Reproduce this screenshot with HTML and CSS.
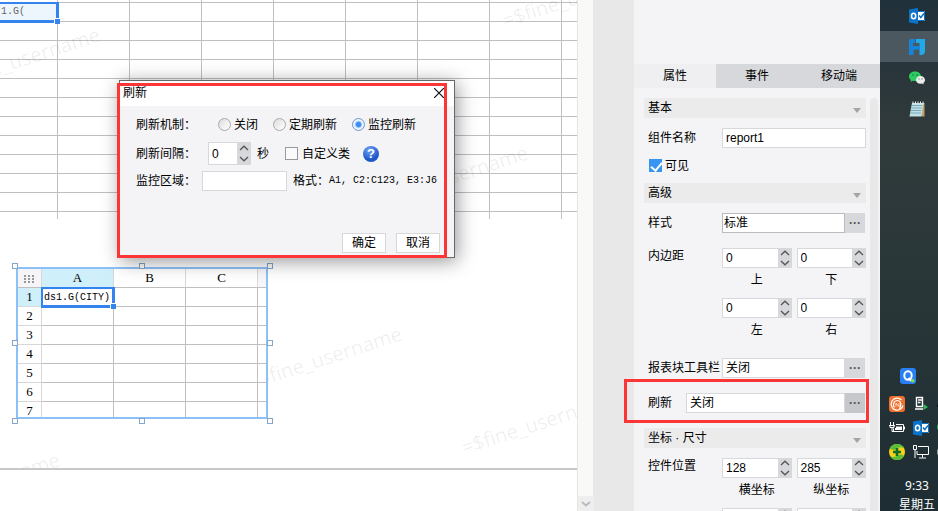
FILE: index.html
```html
<!DOCTYPE html>
<html lang="zh-CN">
<head>
<meta charset="utf-8">
<title>报表设计器</title>
<link rel="stylesheet" href="styles.css">
</head>
<body>
<svg class="defs" width="0" height="0" aria-hidden="true">
  <symbol id="up" viewBox="0 0 10 6"><path d="M1 5 5 1.2 9 5" fill="none" stroke="#555" stroke-width="1.3"/></symbol>
  <symbol id="down" viewBox="0 0 10 6"><path d="M1 1 5 4.8 9 1" fill="none" stroke="#555" stroke-width="1.3"/></symbol>
  <symbol id="outlook" viewBox="0 0 16 16">
    <path d="M8 3h8v10H8z" fill="#fff"/>
    <path d="M9 3.500h6.500v9H9" fill="none" stroke="#0a72c8"/>
    <path d="m10 7.500 1.800 2L15 5.500" fill="none" stroke="#0a72c8" stroke-width="1.500"/>
    <path d="M0 1.500 9 0v16L0 14.500z" fill="#0a72c8"/>
    <ellipse cx="4.600" cy="8" rx="2.100" ry="2.800" fill="none" stroke="#fff" stroke-width="1.600"/>
  </symbol>
</svg>

<main class="workspace">
  <section class="sheet">
    <div class="cell-selected">1.G(</div>
  </section>
  <div class="paper-marks" aria-hidden="true">
    <span class="mark m1">=$fine_username</span>
    <span class="mark m2">=$fine_username</span>
    <span class="mark m3">=$fine_username</span>
    <span class="mark m4">=$fine_username</span>
    <span class="mark m5">=$fine_username</span>
    <span class="mark m6">=$fine_username</span>
  </div>

  <section class="report">
    <div class="report-clip">
      <table>
        <thead>
          <tr><th class="corner"><svg width="11" height="8" viewBox="0 0 11 8" fill="#999"><path d="M0 0h2v2H0zM4 0h2v2H4zM8 0h2v2H8zM0 3h2v2H0zM4 3h2v2H4zM8 3h2v2H8zM0 6h2v2H0zM4 6h2v2H4zM8 6h2v2H8z"/></svg></th><th class="active">A</th><th>B</th><th>C</th><th class="cut"></th></tr>
        </thead>
        <tbody>
          <tr><th class="active">1</th><td class="current">ds1.G(CITY)</td><td></td><td></td><td></td></tr>
          <tr><th>2</th><td></td><td></td><td></td><td></td></tr>
          <tr><th>3</th><td></td><td></td><td></td><td></td></tr>
          <tr><th>4</th><td></td><td></td><td></td><td></td></tr>
          <tr><th>5</th><td></td><td></td><td></td><td></td></tr>
          <tr><th>6</th><td></td><td></td><td></td><td></td></tr>
          <tr><th>7</th><td></td><td></td><td></td><td></td></tr>
        </tbody>
      </table>
    </div>
    <i class="grip t l"></i><i class="grip t c"></i><i class="grip t r"></i>
    <i class="grip m l"></i><i class="grip m r"></i>
    <i class="grip b l"></i><i class="grip b c"></i><i class="grip b r"></i>
  </section>

  <section class="dialog" role="dialog" aria-labelledby="dlg-title">
    <header class="dialog-head">
      <span id="dlg-title">刷新</span>
      <button class="close" aria-label="关闭"><svg width="10" height="10" viewBox="0 0 10 10"><path d="M0 0 10 10M10 0 0 10" stroke="#111" stroke-width="1.200"/></svg></button>
    </header>
    <form class="dialog-body">
      <div class="line">
        <span class="line-label wide">刷新机制：</span>
        <label class="choice"><input type="radio" name="mode">关闭</label>
        <label class="choice"><input type="radio" name="mode">定期刷新</label>
        <label class="choice"><input type="radio" name="mode" checked>监控刷新</label>
      </div>
      <div class="line">
        <label class="line-label mid" for="interval">刷新间隔：</label>
        <span class="spin short"><input id="interval" type="text" value="0"><span class="arrows"><button type="button" aria-label="增加"><svg width="10" height="6"><use href="#up"/></svg></button><button type="button" aria-label="减少"><svg width="10" height="6"><use href="#down"/></svg></button></span></span>
        <span class="unit">秒</span>
        <label class="choice tick"><input type="checkbox">自定义类</label>
        <button type="button" class="help" aria-label="帮助">?</button>
      </div>
      <div class="line low">
        <label class="line-label" for="area">监控区域：</label>
        <input class="area" id="area" type="text">
        <span class="hint">格式：</span><span class="code">A1, C2:C123, E3:J6</span>
      </div>
      <div class="actions"><button type="button">确定</button><button type="button">取消</button></div>
    </form>
  </section>
</main>

<div class="scroll"><button aria-label="向下滚动"><svg width="10" height="6" viewBox="0 0 10 6"><path d="M1 1 5 4.500 9 1" fill="none" stroke="#bbb" stroke-width="2"/></svg></button></div>

<aside class="panel">
  <nav class="tabs"><button class="on">属性</button><button>事件</button><button>移动端</button></nav>
  <div class="panel-main">
    <div class="props">
      <h2>基本</h2>
      <div class="prop"><label for="name">组件名称</label><input id="name" type="text" value="report1"></div>
      <label class="choice visible"><input type="checkbox" checked>可见</label>
      <h2>高级</h2>
      <div class="prop"><label for="style">样式</label><span class="pick dark"><input id="style" type="text" value="标准"><button aria-label="选择样式">···</button></span></div>
      <div class="prop spaced">
        <span class="side">内边距</span>
        <div class="pairs">
          <label class="num"><span class="spin"><input type="text" value="0"><span class="arrows"><button aria-label="增加"><svg width="10" height="6"><use href="#up"/></svg></button><button aria-label="减少"><svg width="10" height="6"><use href="#down"/></svg></button></span></span>上</label>
          <label class="num"><span class="spin"><input type="text" value="0"><span class="arrows"><button aria-label="增加"><svg width="10" height="6"><use href="#up"/></svg></button><button aria-label="减少"><svg width="10" height="6"><use href="#down"/></svg></button></span></span>下</label>
          <label class="num"><span class="spin"><input type="text" value="0"><span class="arrows"><button aria-label="增加"><svg width="10" height="6"><use href="#up"/></svg></button><button aria-label="减少"><svg width="10" height="6"><use href="#down"/></svg></button></span></span>左</label>
          <label class="num"><span class="spin"><input type="text" value="0"><span class="arrows"><button aria-label="增加"><svg width="10" height="6"><use href="#up"/></svg></button><button aria-label="减少"><svg width="10" height="6"><use href="#down"/></svg></button></span></span>右</label>
        </div>
      </div>
      <div class="prop spaced"><label for="bar">报表块工具栏</label><span class="pick"><input id="bar" type="text" value="关闭"><button aria-label="设置工具栏">···</button></span></div>
      <div class="prop spaced narrow marked"><label for="refresh">刷新</label><span class="pick pressed"><input id="refresh" type="text" value="关闭"><button aria-label="设置刷新">···</button></span></div>
      <h2 class="spaced">坐标 · 尺寸</h2>
      <div class="prop">
        <span class="side">控件位置</span>
        <div class="pairs">
          <label class="num"><span class="spin"><input type="text" value="128"><span class="arrows"><button aria-label="增加"><svg width="10" height="6"><use href="#up"/></svg></button><button aria-label="减少"><svg width="10" height="6"><use href="#down"/></svg></button></span></span>横坐标</label>
          <label class="num"><span class="spin"><input type="text" value="285"><span class="arrows"><button aria-label="增加"><svg width="10" height="6"><use href="#up"/></svg></button><button aria-label="减少"><svg width="10" height="6"><use href="#down"/></svg></button></span></span>纵坐标</label>
          <label class="num"><span class="spin"><input type="text"><span class="arrows"><button aria-label="增加"><svg width="10" height="6"><use href="#up"/></svg></button><button aria-label="减少"><svg width="10" height="6"><use href="#down"/></svg></button></span></span></label>
          <label class="num"><span class="spin"><input type="text"><span class="arrows"><button aria-label="增加"><svg width="10" height="6"><use href="#up"/></svg></button><button aria-label="减少"><svg width="10" height="6"><use href="#down"/></svg></button></span></span></label>
        </div>
      </div>
    </div>
    <div class="thumb"></div>
  </div>
</aside>

<aside class="taskbar">
  <div class="apps">
    <button aria-label="Outlook"><svg width="16" height="16"><use href="#outlook"/></svg></button>
    <button class="on" aria-label="设计器"><svg width="16" height="16" viewBox="0 0 16 16"><path d="M0 2Q0 0 2 0H6V3.500L4 4.500V7H7V10.500H4.500V16H0z" fill="#1585dc"/><path d="M7 0H16V12Q16 16 12 16H10.500V4H7z" fill="#22a9e8"/><path d="M4 7h7v3.500H4z" fill="#1585dc"/></svg></button>
    <button aria-label="微信"><svg width="16" height="16" viewBox="0 0 16 16"><path d="M6 1.500C2.700 1.500 0 3.600 0 6.400c0 1.500.8 2.800 2 3.700L1.500 12l2.200-1.200c3 1 8.300-.3 8.300-4.400C12 3.600 9.300 1.500 6 1.500z" fill="#2dcc62"/><circle cx="4" cy="5" r=".8" fill="#146b32"/><circle cx="8" cy="5" r=".8" fill="#146b32"/><path d="M11.500 6C9 6 7 7.800 7 9.900s2 3.900 4.500 3.900l1.500-.2 1.700.9-.4-1.500c1-.7 1.700-1.800 1.700-3.100C16 7.800 14 6 11.500 6z" fill="#ececec"/><circle cx="10" cy="9" r=".7" fill="#777"/><circle cx="13" cy="9" r=".7" fill="#777"/></svg></button>
    <button aria-label="记事本"><svg width="16" height="16" viewBox="0 0 16 16"><path d="M3.500 2H15.500V15.500H13z" fill="#c5a06a"/><path d="M3 2H14.500L12.500 15.500H.5z" fill="#bfe0e6"/><path d="M3 4.500h10.500M2.500 7h10.500M2 9.500h10.500M1.500 12H12" stroke="#78aab8"/><path d="M4 .5v3M6.500 .5v3M9 .5v3M11.500 .5v3M14 .5v3" stroke="#e9eeee"/></svg></button>
  </div>
  <svg class="lead" width="16" height="16" viewBox="0 0 16 16"><rect width="16" height="16" rx="3" fill="#2880f4"/><ellipse cx="8" cy="7.500" rx="3.700" ry="4.300" fill="none" stroke="#fff" stroke-width="2"/><path d="m8.500 10 3 3" stroke="#fff" stroke-width="2"/><circle cx="12.800" cy="12.800" r="1.700" fill="#8ae04c"/></svg>
  <div class="tray">
    <svg width="16" height="16" viewBox="0 0 16 16"><rect width="16" height="16" rx="3" fill="#f0702d"/><path d="M12.500 4A6 6 0 1 0 14 9.500M5.500 11.500C3.500 9 4.500 5 8 4.500c3 0 4.500 2.500 3.500 5.500l-1 3" fill="none" stroke="#fff" stroke-width="1.200"/><path d="M7 10.500V7l3 3.500V7" fill="none" stroke="#ffe0c8"/></svg>
    <svg width="16" height="16" viewBox="0 0 16 16"><path d="M3.500 1.500h6v9h-6zM5 4h4M5 6.500h2.500M2 13h8" fill="none" stroke="#fff" stroke-width="1.400"/><path d="m10.500 8 4.500 3-4.500 3z" fill="#31ba5b"/></svg>
    <svg width="16" height="16" viewBox="0 0 16 16"><path d="M0 9 5 5v6H0z" fill="#090d10"/></svg>
    <svg width="16" height="16" viewBox="0 0 16 16"><path d="M1.500 2v3M4.500 2v3M0 5.500h6M1 6v1.500h4V6M3 7.500v4h2" fill="none" stroke="#fff"/><path d="M7 4.500h7.500v7H4.500V8.500" fill="none" stroke="#fff"/><path d="M7 6.500h6v3.500H6V8h1zM15 6.500h1v3h-1z" fill="#fff"/></svg>
    <svg width="16" height="16"><use href="#outlook"/></svg>
    <svg width="16" height="16" viewBox="0 0 16 16"><circle cx="5" cy="7" r="5" fill="#21bd5b"/></svg>
    <svg width="16" height="16" viewBox="0 0 16 16"><circle cx="8" cy="8" r="8" fill="#f5d31a"/><path d="M1 4.200A8 8 0 0 1 15 4c-4-1.500-6-.5-8 1S2 6 1 4.200zM1 12a8 8 0 0 0 14 0c-2-2-4-2-6-.5S3 13.500 1 12z" fill="#58bd38"/><path d="M8 4v8M4 8h8" stroke="#116b2c" stroke-width="2.600"/></svg>
    <svg width="16" height="16" viewBox="0 0 16 16"><path d="M5 2.500h10.500v8H4V7M9.500 10.500v3M6 14h7M.5 1.500h3v4h-3zM2 5.500V14" fill="none" stroke="#fff"/></svg>
    <svg width="16" height="16" viewBox="0 0 16 16"><path d="M.5 5.500h4v5h-4z" fill="#fff"/></svg>
  </div>
  <div class="clock"><time>9:33</time><span>星期五</span></div>
</aside>
</body>
</html>
```

FILE: styles.css
```css
* { box-sizing: border-box; }
body {
  margin: 0;
  height: 100vh;
  display: flex;
  overflow: hidden;
  background: #fff;
  color: #000;
  font: 12px/16px "Liberation Sans", "Noto Sans CJK SC", sans-serif;
}
.defs { position: absolute; }
button, input { font: inherit; color: inherit; margin: 0; }
button { border: 0; padding: 0; background: none; display: flex; align-items: center; justify-content: center; }
input[type="text"] { width: 100%; min-width: 0; border: 1px solid #d7d8db; background: #fff; padding: 0 3px; border-radius: 0; }

/* Design canvas */
.workspace { flex: 1; min-width: 0; position: relative; overflow: hidden; }
.sheet {
  height: 219px;
  background:
    linear-gradient(#bfbfbf, #bfbfbf) 0 2px / 100% 1px no-repeat,
    repeating-linear-gradient(to bottom, transparent 0 2px, #bfbfbf 2px 3px, transparent 3px 19px),
    repeating-linear-gradient(to right, transparent 0 57px, #bfbfbf 57px 58px, transparent 58px 72px);
  padding-top: 2px;
}
.cell-selected {
  position: relative;
  width: 59px;
  height: 21px;
  border: solid #3583ee;
  border-width: 2px 3px 3px 0;
  background: #eef6fd;
  color: #666;
  padding-left: 1px;
  font-family: "Liberation Mono", monospace;
  font-size: 10px;
}
.cell-selected::after, .current::after {
  content: "";
  position: absolute;
  right: -4px;
  bottom: -4px;
  width: 5px;
  height: 5px;
  background: #3583ee;
  box-shadow: -1px -1px #fff;
}
.paper-marks { position: absolute; inset: 0 0 41px; overflow: hidden; border-bottom: 2px solid #c8c8c8; }
.mark {
  position: absolute;
  font: 20px/24px "Open Sans", sans-serif;
  color: rgba(0, 0, 0, .07);
  transform: rotate(-18deg);
  transform-origin: 0 50%;
}
.m1 { left: -54px; top: 72px; }
.m2 { left: 503px; top: 9px; }
.m3 { left: 374px; top: 190px; }
.m4 { left: 248px; top: 371px; }
.m5 { left: 462px; top: 436px; }
.m6 { left: -94px; top: 497px; }

/* Report block */
.report { position: absolute; left: 16px; top: 267px; width: 252px; height: 152px; border: 2px solid #8cc1f8; background: #fff; }
.report-clip { height: 100%; overflow: hidden; }
table { width: 100%; table-layout: fixed; border-collapse: separate; border-spacing: 0; }
tr { height: 19px; }
th, td { height: 19px; padding: 0; border: solid #bfbfbf; border-width: 0 1px 1px 0; width: 72px; line-height: 16px; }
th { font: 13px/18px "Liberation Serif", serif; text-align: center; border-color: #d8d8d8; }
th:last-child, td:last-child { border-right: 0; }
thead th { border-bottom-color: #bfbfbf; }
.corner { width: 24px; background: #f5f5f8; }
.corner svg { display: block; margin: 1px auto 0; }
.cut { width: auto; background: #f7f7f9; }
.active { background: #cfeffb; }
.current { position: relative; font-family: "Liberation Mono", monospace; font-size: 10px; padding: 2px 0 0 2px; }
.current::before { content: ""; position: absolute; inset: -1px -2px -2px -1px; border: 3px solid #3583ee; border-width: 2px 3px 3px 2px; }
.current::after { right: -3px; bottom: -3px; }
.grip { position: absolute; width: 6px; height: 6px; border: 1px solid #84a6c8; background: #fff; }
.t { top: -6px; } .m { top: 71px; } .b { bottom: -7px; }
.l { left: -6px; } .c { left: 121px; } .r { right: -7px; }

/* Refresh dialog */
.dialog { position: absolute; left: 119px; top: 80px; width: 336px; border: 1px solid #68686b; background: #f4f4f7; box-shadow: 2px 3px 18px rgba(0, 0, 0, .42); }
.dialog::after { content: ""; position: absolute; inset: 2px 7px -1px -3px; border: 3px solid #fc3636; pointer-events: none; }
.dialog-head { height: 25px; padding: 0 10px 2px 3px; display: flex; align-items: center; justify-content: space-between; background: #fff; }
.dialog-body { padding: 7px 14px 4px 16px; }
.line { display: flex; height: 23px; align-items: center; margin-bottom: 6px; white-space: nowrap; }
.line.low { height: 20px; }
.line-label { width: 66px; flex: none; }
.line-label.mid { width: 72px; }
.line-label.wide { width: 82px; }
.choice { display: flex; align-items: center; gap: 3px; margin-right: 15px; }
input[type="radio"] { appearance: none; width: 13px; height: 13px; border: 1px solid #a8a8a8; border-radius: 50%; background: linear-gradient(135deg, #ddd, #fff); }
input[type="radio"]:checked { border-color: #7396c4; background: radial-gradient(circle, #3c8cf0 0 2px, #eaf3fd 4px); }
input[type="checkbox"] { appearance: none; width: 13px; height: 13px; border: 1px solid #999; background: #fafafa; }
input[type="checkbox"]:checked { border-color: #3595f0; background: #3595f0; position: relative; }
input[type="checkbox"]:checked::after { content: ""; position: absolute; left: 3px; top: 0; width: 5px; height: 9px; border: solid #fff; border-width: 0 2px 2px 0; transform: rotate(40deg); }
.spin { display: flex; width: 100%; height: 20px; }
.spin input { border-right: 0; }
.spin.short { width: 43px; height: 23px; }
.arrows { flex: none; width: 14px; display: flex; flex-direction: column; background: #d7d8db; }
.arrows button { flex: 1; }
.unit { width: 28px; margin-left: 6px; }
.tick { margin-right: 13px; gap: 4px; }
.help { width: 16px; height: 16px; border-radius: 50%; background: radial-gradient(circle at 40% 25%, #6fa4f0, #1f56c8 65%); color: #fff; font-weight: bold; font-size: 13px; }
input.area { width: 85px; height: 20px; margin-right: 6px; }
.hint { width: 36px; }
.code { font-family: "Liberation Mono", monospace; font-size: 10px; }
.actions { display: flex; justify-content: flex-end; gap: 10px; margin-top: 42px; }
.actions button { width: 44px; height: 20px; border: 1px solid #d7d8db; background: #fff; }

/* Canvas scroll bar */
.scroll { flex: none; width: 57px; padding-right: 40px; display: flex; flex-direction: column; justify-content: flex-end; border-left: 1px solid #e6e6dc; background: linear-gradient(to right, #f9f9f7 15px, #e8e8e8 15px); }
.scroll button { width: 16px; height: 15px; background: #eee; }

/* Property panel */
.panel { flex: none; width: 246px; padding-top: 64px; display: flex; flex-direction: column; background: #f4f4f7; }
.tabs { display: flex; height: 24px; flex: none; }
.tabs button { flex: 1; background: #d7d8db; }
.tabs .on { background: #efeff1; }
.panel-main { display: flex; flex: 1; min-height: 0; gap: 4px; padding: 10px 2px 0 10px; }
.thumb { flex: none; width: 8px; height: 420px; border-radius: 4px; background: #e8e8e8; }
.props { flex: 1; display: flex; flex-direction: column; gap: 10px; }
.props > * { flex: none; }
h2 { margin: 0; height: 20px; padding: 0 5px 0 4px; display: flex; align-items: center; justify-content: space-between; font: inherit; background: #ebebec; }
h2::after { content: ""; border: 4px solid transparent; border-top: 5px solid #a5a5a5; border-bottom: 0; margin-top: 4px; }
.prop { display: grid; grid-template-columns: 74px 1fr; padding-left: 4px; line-height: 20px; white-space: nowrap; }
.prop.narrow { grid-template-columns: 38px 1fr; }
.prop input { height: 20px; }
.spaced { margin-top: 5px; }
.side { line-height: 16px; }
.visible { height: 15px; padding-left: 5px; }
.pick { display: flex; padding-right: 1px; }
.pick button { flex: none; width: 20px; background: #d7d8db; color: #555; font-weight: bold; }
.pick.dark input { border-color: #bbb; padding-left: 1px; }
.pick.pressed button { background: #c6c7ca; }
.marked { position: relative; }
.marked::after { content: ""; position: absolute; inset: -14px -3px -10px -20px; border: 3px solid #fc3636; pointer-events: none; }
.pairs { display: grid; grid-template-columns: 1fr 1fr; gap: 5px; }
.num { display: flex; flex-direction: column; align-items: center; line-height: 25px; }

/* System task bar */
.taskbar { flex: none; width: 58px; overflow: hidden; display: flex; flex-direction: column; background: linear-gradient(#20303a, #303a3b 25%, #283638 60%, #1e2d34); color: #fff; }
.apps button { width: 100%; height: 31px; padding-left: 16px; }
.apps .on { background: #4c585f; }
.lead { flex: none; margin: auto 0 12px 20px; }
.tray { margin-left: 9px; display: grid; grid-template-columns: repeat(3, 24px); grid-auto-rows: 16px; gap: 8px 0; }
.clock { margin: 16px 0 -3px 16px; display: flex; flex-direction: column; text-align: center; line-height: 19px; width: 42px; font-family: "Noto Sans", "Noto Sans CJK SC", sans-serif; }
```
